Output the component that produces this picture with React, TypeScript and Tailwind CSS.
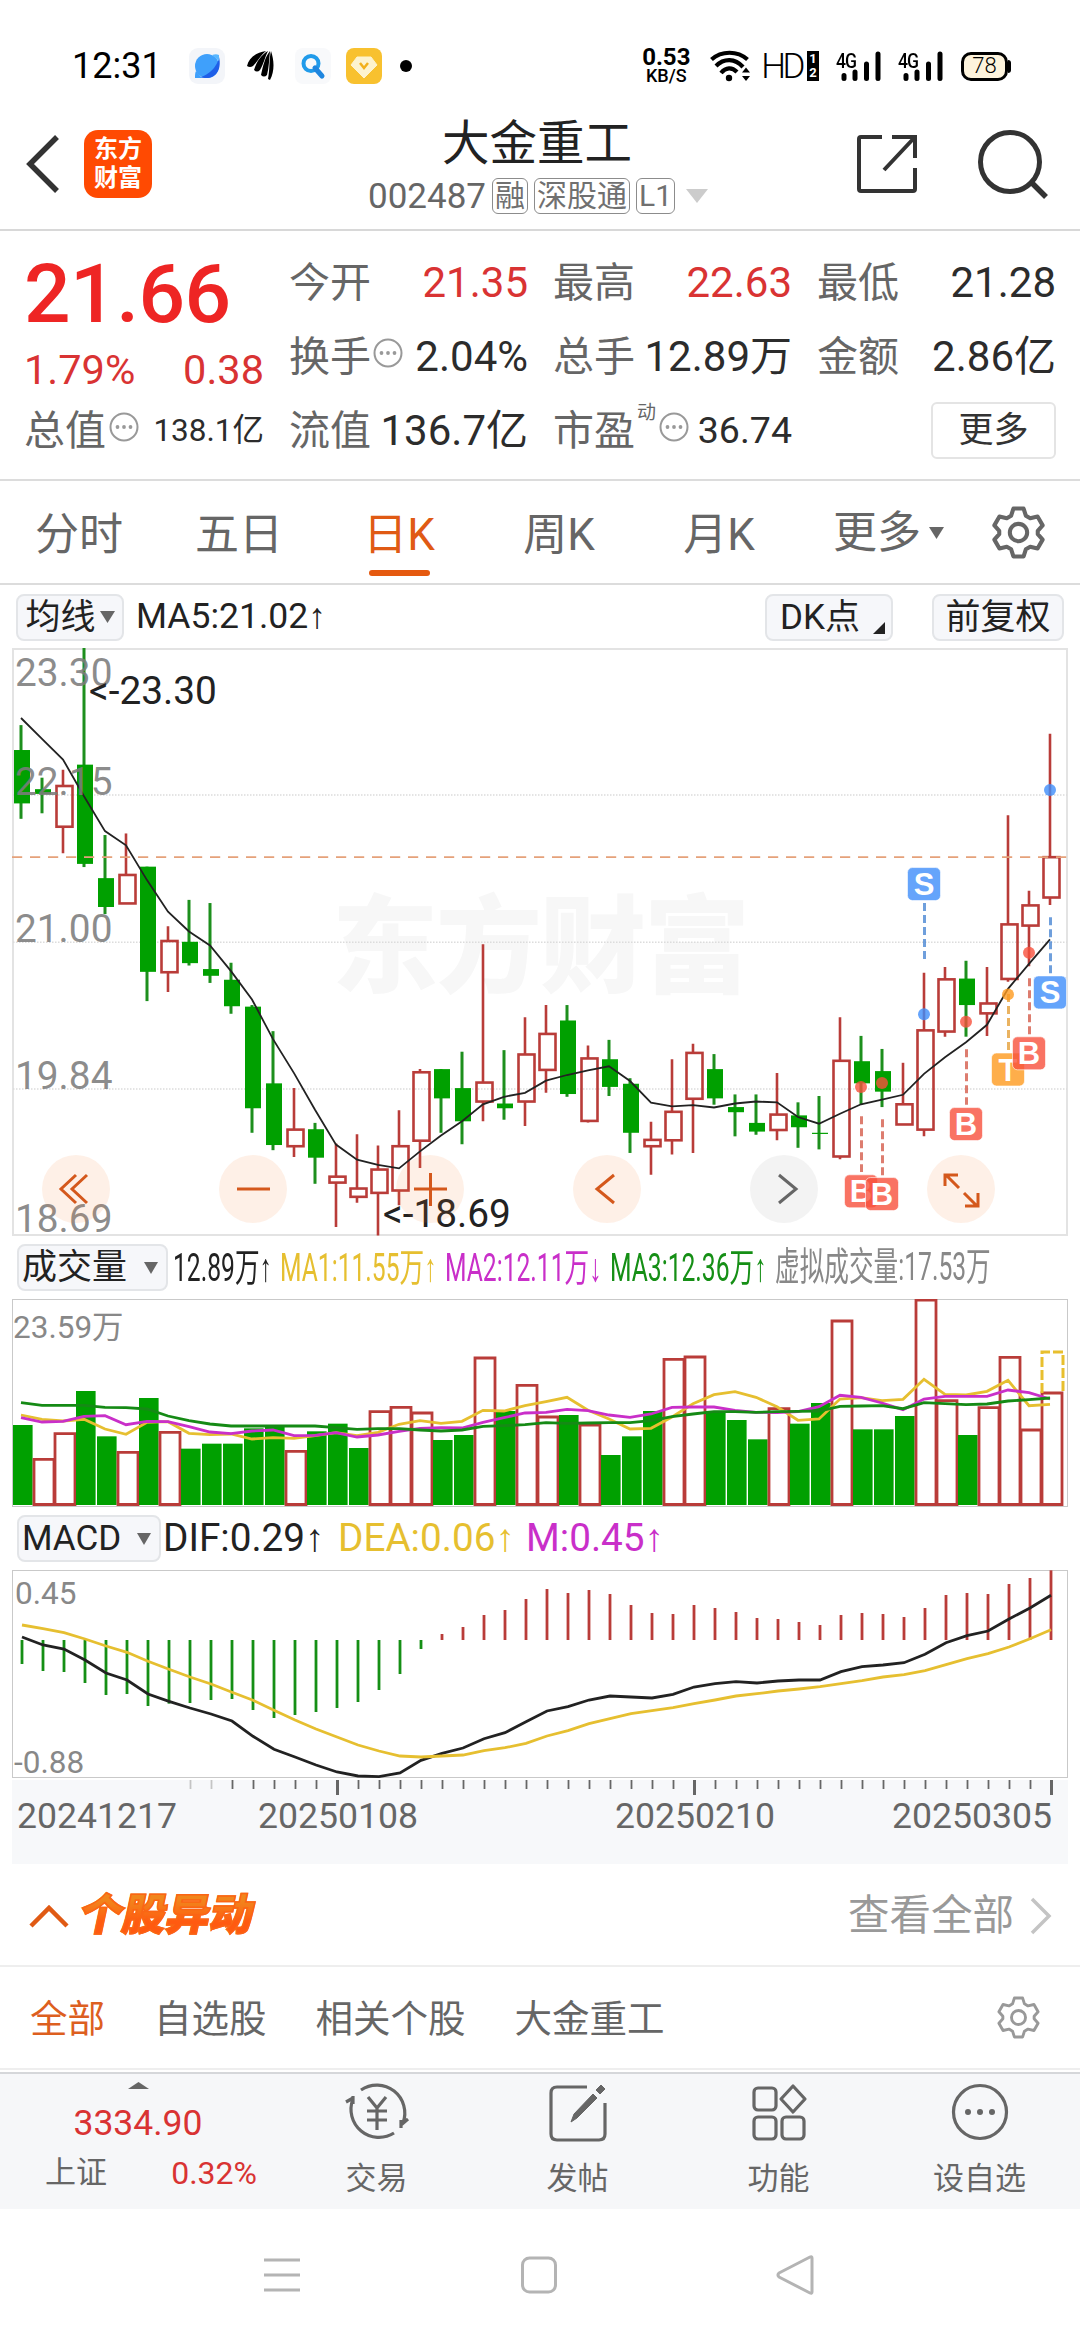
import { ReactNode } from "react"
import clsx from "clsx"

type Candle = {
    up: boolean
    high: number
    top: number
    bottom: number
    low: number
}

// [direction, high, body top, body bottom, low]
const rawCandles: [string, number, number, number, number][] = [
    ['g', 240, 303, 438, 477], ['g', 373, 402, 414, 463], ['r', 353, 394, 497, 564], ['g', 45, 340, 591, 599],
    ['g', 518, 627, 700, 718], ['r', 514, 619, 691, 691], ['g', 598, 598, 864, 938], ['r', 749, 786, 865, 915],
    ['g', 682, 788, 842, 848], ['g', 690, 857, 874, 892], ['g', 841, 884, 951, 970], ['g', 948, 952, 1209, 1271],
    ['g', 1014, 1146, 1302, 1315], ['r', 1158, 1263, 1305, 1332], ['g', 1246, 1262, 1334, 1400], ['r', 1298, 1382, 1397, 1509],
    ['r', 1275, 1412, 1433, 1448], ['r', 1303, 1364, 1423, 1531], ['r', 1214, 1305, 1417, 1454], ['r', 1110, 1118, 1291, 1360],
    ['g', 1110, 1110, 1184, 1271], ['g', 1066, 1158, 1242, 1300], ['r', 794, 1144, 1192, 1242], ['g', 1062, 1197, 1209, 1238],
    ['r', 979, 1073, 1192, 1254], ['r', 948, 1021, 1112, 1170], ['g', 948, 987, 1173, 1180], ['r', 1050, 1083, 1241, 1245],
    ['g', 1036, 1085, 1155, 1178], ['g', 1133, 1147, 1271, 1322], ['r', 1243, 1289, 1305, 1377], ['r', 1085, 1218, 1290, 1326],
    ['r', 1046, 1069, 1185, 1322], ['g', 1072, 1110, 1184, 1200], ['g', 1174, 1206, 1219, 1280], ['g', 1174, 1246, 1268, 1276],
    ['r', 1120, 1225, 1264, 1290], ['g', 1194, 1227, 1257, 1309], ['g', 1178, 1271, 1274, 1313], ['r', 979, 1089, 1331, 1338],
    ['g', 1026, 1090, 1146, 1200], ['g', 1059, 1115, 1167, 1206], ['r', 1094, 1199, 1250, 1250], ['r', 866, 1012, 1263, 1280],
    ['r', 852, 883, 1015, 1028], ['g', 836, 881, 948, 1028], ['r', 852, 944, 969, 1026], ['r', 468, 744, 882, 889],
    ['r', 659, 696, 747, 850], ['r', 262, 574, 676, 695]
]

const candles: Candle[] = rawCandles.map(([dir, high, top, bottom, low]) => ({ up: dir === 'r', high, top, bottom, low }))

const ma5 = [
    222, 275, 327, 420, 508, 544, 632, 712, 762, 797, 862, 934, 1034, 1120, 1213, 1301, 1339, 1352, 1361, 1318,
    1278, 1242, 1199, 1180, 1170, 1139, 1125, 1113, 1103, 1140, 1195, 1204, 1201, 1207, 1197, 1192, 1194, 1231, 1248, 1223,
    1199, 1187, 1175, 1122, 1080, 1042, 998, 907, 844, 782
]

const volumes = [
    585, 688, 611, 483, 619, 667, 504, 607, 656, 641, 641, 595, 585, 664, 604, 581, 654, 545, 532, 549,
    630, 615, 384, 543, 466, 561, 555, 585, 675, 619, 543, 388, 381, 543, 570, 628, 536, 581, 519, 273,
    598, 598, 558, 200, 512, 615, 533, 382, 600, 489
]
// volume direction differs from the candle on a few days
const volumeUp = [1, 2, 5, 7, 13, 17, 18, 19, 22, 24, 25, 27, 31, 32, 36, 39, 43, 44, 46, 47, 48, 49]

const volMa1 = [
    555, 568, 573, 568, 597, 613, 577, 575, 610, 614, 612, 627, 623, 625, 617, 608, 617, 607, 583, 572,
    580, 574, 541, 543, 527, 515, 502, 541, 567, 597, 595, 561, 521, 494, 485, 502, 530, 571, 567, 507,
    503, 512, 508, 448, 493, 495, 484, 451, 527, 523
]
const volMa2 = [
    563, 576, 574, 559, 557, 584, 574, 575, 590, 606, 611, 603, 600, 617, 616, 608, 621, 615, 604, 595,
    593, 594, 577, 563, 549, 547, 538, 542, 555, 562, 552, 532, 531, 531, 541, 547, 548, 545, 530, 496,
    502, 519, 539, 507, 499, 499, 499, 480, 488, 507
]
const volMa3 = [
    518, 526, 526, 526, 532, 533, 537, 558, 572, 582, 588, 588, 588, 588, 588, 593, 598, 596, 596, 600,
    603, 600, 589, 587, 584, 578, 580, 579, 578, 578, 572, 560, 552, 545, 545, 547, 545, 544, 543, 529,
    528, 527, 536, 518, 521, 524, 522, 513, 509, 504
]

const macdBars = [
    492, 513, 516, 549, 585, 582, 618, 611, 609, 600, 597, 630, 654, 645, 636, 624, 606, 570, 522, 447,
    402, 381, 345, 330, 297, 267, 279, 270, 282, 315, 339, 342, 315, 324, 336, 354, 357, 366, 375, 345,
    339, 342, 351, 324, 285, 279, 282, 252, 234, 211
]
const dif = [
    411, 435, 447, 480, 519, 540, 582, 604, 624, 642, 663, 709, 748, 771, 795, 816, 828, 830, 819, 781,
    760, 744, 716, 698, 665, 633, 620, 600, 588, 591, 594, 583, 561, 551, 545, 549, 543, 540, 540, 515,
    500, 495, 488, 463, 428, 407, 393, 357, 324, 286
]
const dea = [
    375, 386, 398, 417, 438, 457, 484, 508, 531, 552, 577, 601, 631, 660, 687, 711, 735, 753, 768, 771,
    768, 765, 752, 743, 730, 708, 692, 671, 656, 641, 632, 623, 611, 600, 588, 581, 573, 567, 560, 551,
    542, 531, 524, 512, 494, 476, 461, 441, 416, 389
]

// [candle index, letter, label y, dash from, dash to, dot y]
const marks: [number, string, number, number, number, number][] = [
    [43, 'S', 642, 690, 832, 971],
    [49, 'S', 916, 726, 868, 404],
    [45, 'B', 1249, 1060, 1200, 990],
    [47, 'T', 1111, 920, 1062, 921],
    [48, 'B', 1070, 880, 1022, 816],
    [40, 'B', 1419, 1229, 1370, 1155],
    [41, 'B', 1426, 1237, 1379, 1145]
]

const markColors: Record<string, { box: string, line: string }> = {
    S: { box: '#3f8dfa', line: '#3f7fd0' },
    B: { box: '#f8503c', line: '#d2523f' },
    T: { box: '#fe9a1e', line: '#e39a2c' }
}

const RED = '#b93c39'
const GREEN = '#00a000'

const stepX = (i: number) => 9 + i * 21
const priceY = (v: number) => (v - 45) / 2.529
const volY = (v: number) => (v - 207) / 3
const macdY = (v: number) => (v - 210) / 3

const toPoints = (values: number[], scale: (v: number) => number, dx = 0) =>
    values.map((v, i) => `${stepX(i) + dx},${scale(v).toFixed(1)}`).join(' ')

const Arrow = ({ down }: { down?: boolean }) => (
    <span className="font-['Liberation_Sans']">{down ? '↓' : '↑'}</span>
)

const Caret = ({ className }: { className?: string }) => (
    <svg className={className} viewBox="0 0 16 12" preserveAspectRatio="none" fill="currentColor">
        <path d="M0 0h16l-8 12z" />
    </svg>
)

const MoreDots = () => (
    <svg className="h-[30px] w-[30px] shrink-0" viewBox="0 0 30 30" fill="none" stroke="#999" strokeWidth="2">
        <circle cx="15" cy="15" r="13.5" />
        <g fill="#999" stroke="none">
            <circle cx="8.5" cy="15" r="1.9" />
            <circle cx="15" cy="15" r="1.9" />
            <circle cx="21.5" cy="15" r="1.9" />
        </g>
    </svg>
)

const GearIcon = ({ className, width }: { className?: string, width: number }) => (
    <svg className={className} viewBox="0 0 52 52" fill="none" stroke="currentColor" strokeWidth={width} strokeLinejoin="round">
        <path d="M21 2.500h10l2.200 7 4.300 2.500 7.200-1.700 5 8.700-4.800 5.400v3.200l4.800 5.400-5 8.700-7.200-1.700-4.300 2.500-2.200 7H21l-2.200-7-4.300-2.500-7.200 1.700-5-8.700 4.800-5.400v-3.200L2.300 19l5-8.700 7.200 1.700 4.300-2.500z" />
        <circle cx="26" cy="26" r="8.500" />
    </svg>
)

const SignalIcon = () => (
    <div className="relative h-[32px] w-[46px]">
        <span className="absolute top-[1px] left-0 origin-left scale-x-[0.88] text-[20px] leading-none font-medium tracking-[-1px]">4G</span>
        <svg className="h-[32px] w-[46px]" viewBox="0 0 46 32" stroke="#000" strokeWidth="5" strokeLinecap="round">
            <path d="M8 25.500v3M19 22v6.500M30.500 14v14.500M42 4v24.500" />
        </svg>
    </div>
)

const StatusBar = () => (
    <div className="flex h-[105px] items-center pt-[27px] pl-[72px] pr-[69px] text-black">
        <span className="w-[117px] text-[36px] leading-none">12:31</span>
        <svg className="h-[36px] w-[36px]" viewBox="0 0 36 36">
            <rect width="36" height="36" rx="9" fill="#f3f5f9" />
            <circle cx="18" cy="18" r="12" fill="#3fa0fb" />
            <path d="M6 30c10 0 22-9 24-21 3 12-3 22-14 21-4 0-6-1-7-2z" fill="#1f5fe8" />
            <path d="M6 30c0-3 0-5 1-7l6 7z" fill="#3fa0fb" />
            <path d="M23 7c3-1 5-1 7 0v6z" fill="#58b6ff" />
        </svg>
        <svg className="ml-[22px] h-[30px] w-[27px]" viewBox="0 0 27 30" fill="#000">
            <path d="M0 15C2 7 8 2 19 0 13 5 11 10 6 15q-3 2-6 0z" />
            <path d="M7 19C10 10 14 4 21 0c-3 6-4 12-8 19q-3 3-6 0z" />
            <path d="M14 24C16 15 18 6 23 0c-1 9-1 16-3 24q-3 3-6 0z" />
            <path d="M21 28C23 18 22 8 24 0c3 9 4 19-1 29z" />
        </svg>
        <svg className="ml-[21px] h-[36px] w-[36px]" viewBox="0 0 36 36" fill="none" stroke="#219bea">
            <rect width="36" height="36" rx="8" fill="#f8f9fb" stroke="none" />
            <circle cx="16" cy="15.500" r="7.500" strokeWidth="4" />
            <path d="M20 20l7 8" strokeWidth="5" strokeLinecap="round" stroke="#1f86df" />
        </svg>
        <svg className="ml-[15px] h-[36px] w-[36px]" viewBox="0 0 36 36">
            <rect width="36" height="36" rx="8" fill="#f8c12f" />
            <path d="M11 9h14l6 8-13 13L5 17z" fill="#fdf3cf" stroke="#fdf3cf" strokeWidth="1" strokeLinejoin="round" />
            <path d="M14 15l4 5 4-5" fill="none" stroke="#f2b01c" strokeWidth="2.500" />
        </svg>
        <span className="ml-[18px] h-[12px] w-[12px] rounded-full bg-black" />
        <div className="ml-auto flex items-center">
            <div className="mr-[18px] flex w-[52px] flex-col items-center font-bold leading-none">
                <span className="text-[24px] leading-[20px]">0.53</span>
                <span className="text-[18px] leading-[18px] font-medium">KB/S</span>
            </div>
            <svg className="h-[32px] w-[42px]" viewBox="0 0 42 32" fill="none" stroke="#000" strokeWidth="4.200">
                <path d="M1.500 9.500c10-9 26-9 36 0M6 16c8-8 19-8 27 1M11 23c5-6 11-6 16-1" />
                <circle cx="19" cy="28" r="3.200" fill="#000" stroke="none" />
                <path d="M32 22.500l4-5 4 5M32 26l4 5 4-5" stroke="none" fill="#000" />
            </svg>
            <span className="ml-[9px] text-[35px] leading-none font-light tracking-[-3.500px]">HD</span>
            <span className="ml-[5px] flex h-[30px] w-[12px] flex-col items-center justify-center bg-black text-[13px] leading-[14px] font-bold text-white">
                <span>1</span>
                <span>2</span>
            </span>
            <div className="ml-[17px] flex gap-[16px]">
                <SignalIcon />
                <SignalIcon />
            </div>
            <div className="ml-[17px] flex items-center">
                <span className="flex h-[29px] w-[47px] items-center justify-center rounded-[10px] border-[3px] border-black bg-[#fdf3dc] text-[22px] leading-none font-light">78</span>
                <span className="h-[13px] w-[3px] rounded-r bg-black" />
            </div>
        </div>
    </div>
)

const Tag = ({ children }: { children: ReactNode }) => (
    <span className="flex h-[36px] items-center rounded-[6px] border-[1.500px] border-[#8c8c8c] px-[2px] text-[30px] leading-none text-[#707070]">
        {children}
    </span>
)

const Header = () => (
    <div className="flex h-[126px] items-center justify-between border-b-2 border-[#d8d8d8] pb-[6px] pl-[26px] pr-[32px] text-[#333]">
        <div className="flex w-[300px] items-center">
            <svg className="h-[58px] w-[36px]" viewBox="0 0 36 58" fill="none" stroke="currentColor" strokeWidth="5.500">
                <path d="M31 2L4 29l27 27" />
            </svg>
            <div className="ml-[22px] flex h-[68px] w-[68px] flex-col items-center justify-center rounded-[14px] bg-[#ff4a02] text-[24px] leading-[29px] font-bold text-white">
                <span>东方</span>
                <span>财富</span>
            </div>
        </div>
        <div className="flex flex-col items-center">
            <h1 className="text-[47.500px] leading-[60px] text-[#222]">大金重工</h1>
            <div className="mt-[4px] flex items-center gap-[6px] pl-[2px]">
                <span className="text-[35px] leading-none text-[#666]">002487</span>
                <Tag>融</Tag>
                <Tag>深股通</Tag>
                <Tag>L1</Tag>
                <Caret className="ml-[5px] h-[14px] w-[22px] text-[#ccc]" />
            </div>
        </div>
        <div className="flex w-[300px] items-center justify-end">
            <svg className="mr-[60px] h-[60px] w-[62px]" viewBox="0 0 62 60" fill="none" stroke="currentColor" strokeWidth="4">
                <path d="M26 3H5q-2 0-2 2v50q0 2 2 2h52q2 0 2-2V34M36 3h23v21M59 3L28 36" />
            </svg>
            <svg className="h-[70px] w-[70px]" viewBox="0 0 70 70" fill="none" stroke="currentColor" strokeWidth="5">
                <circle cx="32" cy="33" r="29.500" />
                <path d="M53 53l15 15" strokeWidth="5.500" />
            </svg>
        </div>
    </div>
)

type CellProps = {
    label: string
    value?: string
    red?: boolean
    dots?: boolean
    sup?: string
    small?: boolean
}

const Cell = ({ label, value, red, dots, sup, small }: CellProps) => (
    <div className="flex h-[74px] w-[239px] items-center justify-between pt-[2px] whitespace-nowrap">
        <span className="flex items-center text-[41px] leading-none text-[#666]">
            {label}
            {sup && <span className="mt-[-38px] ml-[2px] w-[20px] text-[19px]">{sup}</span>}
            {dots && <span className="mt-[-8px] ml-[2px]"><MoreDots /></span>}
        </span>
        <span className={clsx('leading-none', small ? 'text-[37.500px]' : 'text-[42px]', red ? 'text-[#d93333]' : 'text-[#2c2c2c]')}>{value}</span>
    </div>
)

const QuotePanel = () => (
    <div className="flex h-[250px] gap-[25px] border-b-2 border-[#dcdcdc] pt-[14px] pl-[24px] pr-[22px]">
        <div className="w-[240px] text-[#d93333]">
            <div className="flex h-[86px] items-center pt-[12px] text-[82px] leading-none font-medium tracking-[-0.500px] text-[#ee2524]">21.66</div>
            <div className="flex h-[62px] items-center justify-between pt-[15px] text-[41.500px] leading-none">
                <span>1.79%</span>
                <span>0.38</span>
            </div>
            <div className="flex h-[74px] items-center pt-[2px] whitespace-nowrap">
                <span className="text-[41px] leading-none text-[#666]">总值</span>
                <span className="mt-[-8px] ml-[3px]"><MoreDots /></span>
                <span className="ml-auto text-[31.500px] leading-none text-[#2c2c2c]">138.1亿</span>
            </div>
        </div>
        <div>
            <Cell label="今开" value="21.35" red />
            <Cell label="换手" value="2.04%" dots />
            <Cell label="流值" value="136.7亿" />
        </div>
        <div>
            <Cell label="最高" value="22.63" red />
            <Cell label="总手" value="12.89万" />
            <Cell label="市盈" value="36.74" sup="动" dots small />
        </div>
        <div>
            <Cell label="最低" value="21.28" />
            <Cell label="金额" value="2.86亿" />
            <div className="flex h-[74px] items-center justify-end pt-[1px]">
                <button className="h-[57px] w-[125px] rounded-[6px] border-2 border-[#e4e4e4] text-[35px] leading-none text-[#333]">更多</button>
            </div>
        </div>
    </div>
)

const PeriodTabs = () => {
    const tabs = ['分时', '五日', '日K', '周K', '月K']

    return (
        <div className="flex h-[104px] items-center border-b-2 border-[#dcdcdc] text-[44px] leading-none text-[#666]">
            {tabs.map((tab) => (
                <div key={tab} className={clsx('flex h-full w-[160px] flex-col items-center pt-[32px] pr-[2px]', tab === '日K' && 'text-[#e05a14]')}>
                    <span>{tab}</span>
                    {tab === '日K' && <span className="mt-[13px] h-[6px] w-[61px] rounded-full bg-[#e5590f]" />}
                </div>
            ))}
            <div className="ml-[33px] flex items-center pt-[2px]">
                <span>更多</span>
                <Caret className="ml-[8px] h-[12px] w-[15px]" />
            </div>
            <GearIcon className="mr-[35px] ml-auto h-[53px] w-[53px]" width={4} />
        </div>
    )
}

const ChipButton = ({ children, className }: { children: ReactNode, className?: string }) => (
    <button className={clsx('flex h-[47px] items-center rounded-[8px] border-2 border-[#e3e5e8] bg-[#f6f7fa] text-[35px] leading-none text-[#222]', className)}>
        {children}
    </button>
)

const MainChart = () => (
    <div className="relative mx-[12px] h-[588px]">
        <svg className="block h-[588px] w-[1056px] overflow-visible" viewBox="0 0 1056 588">
            <g fill="#f7f7f7" fontSize="106" fontWeight="900">
                <text x="320" y="336" textLength="418">东方财富</text>
            </g>
            <rect x="1" y="1" width="1054" height="586" fill="none" stroke="#e3e3e3" strokeWidth="2" />
            {[417, 789, 1160].map((v) => (
                <line key={v} x1="1" x2="1055" y1={priceY(v)} y2={priceY(v)} stroke="#dcdcdc" strokeWidth="1.5" strokeDasharray="1.500 1.500" />
            ))}
            {candles.map((c, i) => {
                const x = stepX(i)
                const top = priceY(c.top)
                const bottom = priceY(c.bottom)
                if (!c.up) {
                    return (
                        <g key={i} fill={GREEN}>
                            <rect x={x - 1.5} y={priceY(c.high)} width="3" height={priceY(c.low) - priceY(c.high)} fill="#1d8f1d" />
                            <rect x={x - 7} y={top} width="16" height={bottom - top} />
                        </g>
                    )
                }
                return (
                    <g key={i} stroke={RED} strokeWidth="2.6" fill="none">
                        <path d={`M${x} ${priceY(c.high)}V${top}M${x} ${bottom}V${priceY(c.low)}`} />
                        <rect x={x - 6.5} y={top} width="16" height={bottom - top} />
                    </g>
                )
            })}
            <line x1="0" x2="1055" y1={priceY(574)} y2={priceY(574)} stroke="#e5a17a" strokeWidth="1.6" strokeDasharray="10.200 7.800" />
            <polyline points={toPoints(ma5, priceY)} fill="none" stroke="#222" strokeWidth="1.8" />
            <g fill="#7c7c7c" fillOpacity="0.88" fontSize="38.800">
                <text x="3" y="37.500">23.30</text>
                <text x="3" y="146.500">22.15</text>
                <text x="3" y="294">21.00</text>
                <text x="3" y="441">19.84</text>
                <text x="3" y="584">18.69</text>
            </g>
            <g fill="#222" fontSize="38.800">
                <text x="77" y="56">&lt;-23.30</text>
                <text x="371" y="579">&lt;-18.69</text>
            </g>
            {marks.map(([i, letter, labelY, from, to, dotY]) => {
                const x = stepX(i)
                const color = markColors[letter]
                return (
                    <g key={i}>
                        <line x1={x + 0.5} x2={x + 0.5} y1={priceY(from)} y2={priceY(to)} stroke={color.line} strokeOpacity="0.75" strokeWidth="3" strokeDasharray="8 4" />
                        <circle cx={x} cy={priceY(dotY)} r="6" fill={color.box} fillOpacity="0.8" />
                        <rect x={x - 16.5} y={priceY(labelY) - 16.5} width="33" height="33" rx="5" fill={color.box} fillOpacity="0.8" stroke="#fff" strokeOpacity="0.6" />
                        <text x={x} y={priceY(labelY) + 11} fill="#fff" fontSize="31" fontWeight="700" textAnchor="middle" className="font-['Liberation_Sans']">{letter}</text>
                    </g>
                )
            })}
        </svg>
        <div className="absolute top-[507px] left-[30px] flex gap-[109px] text-[#d4581c]">
            {[
                'M34 20L19 34l15 14M45 20L30 34l15 14',
                'M18 34h33',
                'M18 34h33M34.500 18v33',
                'M41 20L24 34l17 14',
                'M29 20l17 14-17 14',
                'M18 31V20h13M19 20l13 13M51 38v13H38M50 51L37 38'
            ].map((d, i) => (
                <button key={i} className={clsx('h-[68px] w-[68px] rounded-full', i === 4 ? 'bg-[#888]/10 text-[#666]' : 'bg-[#f9873c]/12')}>
                    <svg viewBox="0 0 68 68" fill="none" stroke="currentColor" strokeWidth="3">
                        <path d={d} />
                    </svg>
                </button>
            ))}
        </div>
    </div>
)

const VolumeChart = () => (
    <svg className="mx-[12px] block h-[208px] w-[1056px]" viewBox="0 0 1056 208">
        <rect x="0.5" y="0.5" width="1055" height="207" fill="none" stroke="#c9c9c9" />
        {volumes.map((v, i) => {
            const x = stepX(i)
            const y = volY(v)
            return volumeUp.includes(i) ? (
                <path key={i} d={v < 207 ? `M${x - 8} 1V205.500H${x + 12}V1z` : `M${x - 8} ${y}V205.500H${x + 12}V${y}z`} fill="none" stroke={RED} strokeWidth="2.8" />
            ) : (
                <rect key={i} x={x - 8} y={y} width="19.6" height={206 - y} fill={GREEN} />
            )
        })}
        <path d={`M1030 ${volY(489)}V${volY(366)}H1051V${volY(489)}`} fill="none" stroke="#e8bf2e" strokeWidth="3" strokeDasharray="10 3" />
        <g fill="none" strokeWidth="2.8">
            <polyline points={toPoints(volMa1, volY)} stroke="#e6bf30" />
            <polyline points={toPoints(volMa2, volY)} stroke="#c92fc9" />
            <polyline points={toPoints(volMa3, volY)} stroke="#158a15" />
        </g>
        <text x="1" y="39" fontSize="31.500" fill="#888">23.59万</text>
    </svg>
)

const MacdChart = () => (
    <svg className="mx-[12px] block h-[294px] w-[1056px]" viewBox="0 0 1056 294">
        <rect y="210" width="1056" height="84" fill="#f7f8fa" />
        <rect x="0.5" y="0.5" width="1055" height="207" fill="none" stroke="#c9c9c9" />
        {macdBars.map((v, i) => (
            <line key={i} x1={stepX(i) + 1} x2={stepX(i) + 1} y1={macdY(420)} y2={macdY(v)} stroke={v > 420 ? '#158f15' : RED} strokeWidth="2.8" />
        ))}
        <g fill="none" strokeWidth="2.8">
            <polyline points={toPoints(dif, macdY, 1)} stroke="#222" />
            <polyline points={toPoints(dea, macdY, 1)} stroke="#e6bf30" />
        </g>
        {macdBars.map((_, i) => {
            if (i < 8) return null
            const major = i === 15 || i === 32 || i === 49
            return (
                <line key={i} x1={stepX(i) + 1.5} x2={stepX(i) + 1.5} y1="210" y2={major ? 225 : 219} stroke={i < 10 ? '#c4c4c4' : '#666'} strokeWidth={major ? 3 : 1.8} />
            )
        })}
        <g fill="#888" fontSize="31.500">
            <text x="3" y="34">0.45</text>
            <text x="2" y="203">-0.88</text>
        </g>
        <g fill="#666" fontSize="35.600">
            <text x="5" y="257.500">20241217</text>
            <text x="246" y="257.500">20250108</text>
            <text x="603" y="257.500">20250210</text>
            <text x="880" y="257.500">20250305</text>
        </g>
    </svg>
)

const Squeezed = ({ children, className }: { children: ReactNode, className: string }) => (
    <span className={className}>
        <span className="inline-block origin-left scale-x-[0.632] whitespace-nowrap">{children}</span>
    </span>
)

const ChartPanel = () => (
    <div>
        <div className="flex h-[63px] items-center pt-[1px] pl-[16px] pr-[16px] text-[35.500px] leading-none text-[#222]">
            <ChipButton className="w-[108px] justify-center gap-[4px]">
                <span>均线</span>
                <Caret className="h-[12px] w-[15px] text-[#666]" />
            </ChipButton>
            <span className="ml-[12px]">MA5:21.02<Arrow /></span>
            <ChipButton className="mr-[39px] ml-auto w-[128px] pl-[13px]">
                <span>DK点</span>
                <svg className="mt-[22px] ml-[13px] h-[12px] w-[12px]" viewBox="0 0 12 12" fill="#222"><path d="M12 0v12H0z" /></svg>
            </ChipButton>
            <ChipButton className="w-[132px] justify-center">前复权</ChipButton>
        </div>
        <MainChart />
        <div className="flex h-[63px] items-center pl-[17px] text-[39px] leading-none">
            <ChipButton className="w-[151px] justify-between pl-[3px] pr-[8px]">
                <span>成交量</span>
                <Caret className="h-[12px] w-[14px] text-[#666]" />
            </ChipButton>
            <div className="flex pl-[5px]">
                <Squeezed className="w-[107px] text-[#222]">12.89万<Arrow /></Squeezed>
                <Squeezed className="w-[165px] text-[#e6bf30]">MA1:11.55万<Arrow /></Squeezed>
                <Squeezed className="w-[165px] text-[#c92fc9]">MA2:12.11万<Arrow down /></Squeezed>
                <Squeezed className="w-[165px] text-[#158f15]">MA3:12.36万<Arrow /></Squeezed>
                <Squeezed className="w-[220px] text-[#888]">虚拟成交量:17.53万</Squeezed>
            </div>
        </div>
        <VolumeChart />
        <div className="flex h-[63px] items-center pl-[17px] text-[38.700px] leading-none">
            <ChipButton className="w-[144px] justify-between pl-[3px] pr-[8px]">
                <span>MACD</span>
                <Caret className="h-[12px] w-[14px] text-[#666]" />
            </ChipButton>
            <span className="w-[175px] pl-[2px] text-[#222]">DIF:0.29<Arrow /></span>
            <span className="w-[188px] pl-[2px] text-[#e6bf30]">DEA:0.06<Arrow /></span>
            <span className="pl-[2px] text-[#c92fc9]">M:0.45<Arrow /></span>
        </div>
        <MacdChart />
    </div>
)

const MovesSection = () => (
    <div>
        <div className="flex h-[103px] items-center border-b-2 border-[#eee] pt-[2px] pl-[29px] pr-[27px]">
            <svg className="h-[24px] w-[40px]" viewBox="0 0 40 24" fill="none" stroke="#e05a14" strokeWidth="4.5">
                <path d="M2 22L20 4l18 18" />
            </svg>
            <h2 className="ml-[11px] -skew-x-12 bg-linear-to-b from-[#f0861c] from-20% to-[#ff5a10] to-60% bg-clip-text text-[43.500px] leading-[54px] font-black text-transparent [-webkit-text-stroke:1.500px_#fb6514]">个股异动</h2>
            <span className="ml-auto text-[41.500px] leading-none text-[#999]">查看全部</span>
            <svg className="ml-[15px] h-[38px] w-[24px]" viewBox="0 0 24 38" fill="none" stroke="#c4c4c4" strokeWidth="3.5">
                <path d="M3 2l17 17L3 36" />
            </svg>
        </div>
        <div className="flex h-[103px] items-center gap-[49px] border-b-2 border-[#eee] pt-[4px] pl-[30px] pr-[40px] text-[37.500px] leading-none text-[#666]">
            <span className="text-[#dd5f1f]">全部</span>
            <span>自选股</span>
            <span>相关个股</span>
            <span>大金重工</span>
            <GearIcon className="mt-[-4px] ml-auto h-[43px] w-[43px] text-[#999]" width={3.5} />
        </div>
    </div>
)

const NavItem = ({ label, children }: { label: string, children: ReactNode }) => (
    <button className="flex flex-1 flex-col items-center pt-[8px] text-[31px] leading-none">
        <svg className="h-[60px] w-[66px]" viewBox="0 0 66 60" fill="none" stroke="currentColor" strokeWidth="3.2">
            {children}
        </svg>
        <span className="mt-[21px]">{label}</span>
    </button>
)

const BottomNav = () => (
    <div className="mt-[2px] flex h-[137px] border-t-2 border-[#d5d7da] bg-[#f6f7f9] text-[#666]">
        <div className="flex w-[276px] flex-col items-center pt-[8px] leading-none">
            <Caret className="h-[7px] w-[21px] rotate-180" />
            <span className="mt-[17px] text-[35.500px] text-[#d93333]">3334.90</span>
            <div className="mt-[15px] flex w-full items-center justify-between pl-[45px] pr-[19px] text-[31px]">
                <span>上证</span>
                <span className="text-[32px] text-[#d93333]">0.32%</span>
            </div>
        </div>
        <NavItem label="交易">
            <path d="M17 8A28 28 0 0 1 59 41M50 51A28 28 0 0 1 9 17M2 20l7-4M57 43l7-6M57 46V38M9 14v8" />
            <path d="M24 15l9 11 9-11M33 26v22M23 29h20M23 38h20" />
        </NavItem>
        <NavItem label="发帖">
            <path d="M42 5H12q-6 0-6 6v41q0 6 6 6h42q6 0 6-6V21" />
            <path d="M26 40l3-8 19-20 4 4-20 20zM51 8l5-5 4 4-5 5z" fill="currentColor" strokeWidth="1" />
        </NavItem>
        <NavItem label="功能">
            <rect x="8" y="6" width="22" height="22" rx="4" />
            <rect x="8" y="35" width="22" height="22" rx="4" />
            <rect x="36" y="35" width="22" height="22" rx="4" />
            <path d="M47 4l12 13-12 13-12-13z" strokeLinejoin="round" />
        </NavItem>
        <NavItem label="设自选">
            <circle cx="33" cy="30" r="26.500" />
            <g fill="currentColor" stroke="none">
                <circle cx="21" cy="30" r="3" />
                <circle cx="33" cy="30" r="3" />
                <circle cx="45" cy="30" r="3" />
            </g>
        </NavItem>
    </div>
)

const SystemNav = () => (
    <div className="flex h-[132px] items-center justify-between pl-[262px] pr-[265px]">
        <svg className="h-[42px] w-[40px]" viewBox="0 0 40 42" fill="none" stroke="#b4b4b4" strokeWidth="3">
            <path d="M2 6h36M2 21h36M2 36h36" />
        </svg>
        <svg className="h-[42px] w-[40px]" viewBox="0 0 40 42" fill="none" stroke="#b4b4b4" strokeWidth="3">
            <rect x="3.500" y="4" width="33" height="34" rx="7" />
        </svg>
        <svg className="h-[42px] w-[40px]" viewBox="0 0 40 42" fill="none" stroke="#b4b4b4" strokeWidth="3" strokeLinejoin="round">
            <path d="M37 4v34q0 2-2 1L4 23q-2-2 0-4L35 3q2-1 2 1z" />
        </svg>
    </div>
)

const App = () => {
    return (
        <div className="h-[2340px] w-[1080px] overflow-hidden bg-white font-['Roboto','Noto_Sans_CJK_SC',sans-serif]">
            <StatusBar />
            <Header />
            <QuotePanel />
            <PeriodTabs />
            <ChartPanel />
            <MovesSection />
            <BottomNav />
            <SystemNav />
        </div>
    )
}

export default App
